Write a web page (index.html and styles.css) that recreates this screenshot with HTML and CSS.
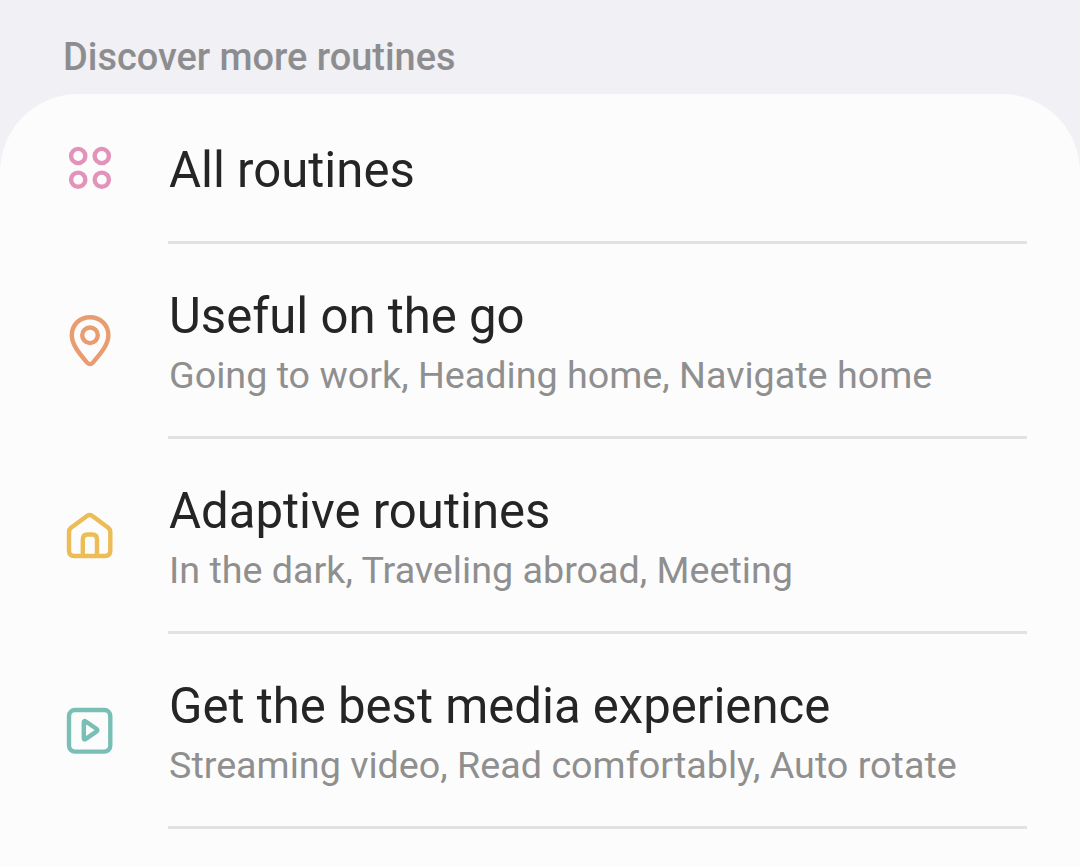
FILE: index.html
```html
<!DOCTYPE html>
<html lang="en">
<head>
    <meta charset="UTF-8">
    <meta name="viewport" content="width=device-width, initial-scale=1.0">
    <title>Routines</title>
    <link rel="stylesheet" href="styles.css">
</head>
<body>
    <h2 class="section-title">Discover more routines</h2>

    <div class="card">
        <div class="row row-single">
            <svg class="icon icon-pink" viewBox="0 0 56 56">
                <circle cx="16.2" cy="17" r="7.1"/>
                <circle cx="39.8" cy="17" r="7.1"/>
                <circle cx="16.2" cy="40.700" r="7.1"/>
                <circle cx="39.8" cy="40.700" r="7.1"/>
            </svg>
            <div class="text">
                <div class="title">All routines</div>
            </div>
        </div>

        <div class="row">
            <svg class="icon icon-orange" viewBox="0 0 56 56">
                <path d="M28 5.200C17.500 5.200 9.800 13 9.800 23.300C9.800 32.500 17 41 25 50.500Q28 53.500 31 50.500C39 41 46.400 32.500 46.400 23.300C46.400 13 38.500 5.200 28 5.200Z"/>
                <circle cx="28" cy="23.3" r="7.8"/>
            </svg>
            <div class="text">
                <div class="title">Useful on the go</div>
                <div class="summary">Going to work, Heading home, Navigate home</div>
            </div>
        </div>

        <div class="row">
            <svg class="icon icon-yellow" viewBox="0 0 56 56">
                <path d="M7 25Q7 22.500 9 20.800L25.300 8.800Q27.700 7 30.100 8.800L46.300 20.800Q48.300 22.500 48.300 25V43.500Q48.300 49 43 49H12.300Q7 49 7 43.500Z"/>
                <path d="M20.800 48.500V32.500Q20.800 27.500 25.500 27.500H30.200Q35 27.500 35 32.500V48.500"/>
            </svg>
            <div class="text">
                <div class="title">Adaptive routines</div>
                <div class="summary">In the dark, Traveling abroad, Meeting</div>
            </div>
        </div>

        <div class="row">
            <svg class="icon icon-teal" viewBox="0 0 56 56">
                <rect x="7" y="8" width="41.3" height="41.6" rx="6"/>
                <path d="M21.800 20.300Q21.800 18.300 23.500 19.300L34.700 27Q36 28.200 34.700 29.400L23.500 37.100Q21.800 38.100 21.800 36.100Z"/>
            </svg>
            <div class="text">
                <div class="title">Get the best media experience</div>
                <div class="summary">Streaming video, Read comfortably, Auto rotate</div>
            </div>
        </div>
    </div>
</body>
</html>
```
FILE: styles.css
```css
body {
    margin: 0;
    height: 867px;
    overflow: hidden;
    background: #f0f0f5;
    font-family: Roboto, sans-serif;
}
.section-title {
    margin: 0;
    height: 94px;
    padding: 35px 0 0 63px;
    box-sizing: border-box;
    font-size: 37.9px;
    line-height: 44px;
    font-weight: 500;
    color: #8d8d8f;
}
.card {
    height: 773px;
    background: #fcfcfc;
    border-radius: 78px 78px 0 0;
}
.row {
    display: flex;
    align-items: center;
    height: 195px;
    padding: 0 53px 0 62px;
}
.row-single {
    height: 150px;
}
.icon {
    width: 56px;
    height: 56px;
    margin: 0 50px 3px 0;
    flex: none;
    fill: none;
    stroke-width: 4.4;
    stroke-linecap: round;
    stroke-linejoin: round;
}
.row-single .icon {
    margin-bottom: 4px;
}
.icon-pink {
    stroke: #e293b9;
}
.icon-orange {
    stroke: #e99c70;
}
.icon-yellow {
    stroke: #ecbc56;
}
.icon-teal {
    stroke: #79bfb5;
}
.text {
    flex: 1;
    height: 100%;
    box-sizing: border-box;
    padding: 43px 0 0 1px;
    border-bottom: 3px solid #e2e2e2;
    white-space: nowrap;
}
.row-single .text {
    padding-top: 47px;
}
.title {
    font-size: 49.1px;
    line-height: 58px;
    color: #252525;
}
.summary {
    margin-top: 8px;
    font-size: 37.7px;
    line-height: 44px;
    color: #8f8f8f;
}
```
